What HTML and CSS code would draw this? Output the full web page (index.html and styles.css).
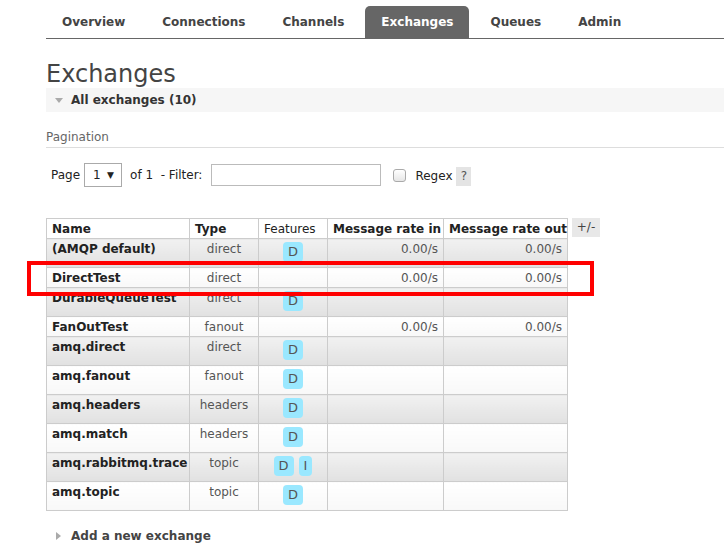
FILE: index.html
```html
<!DOCTYPE html>
<html>
<head>
<meta charset="utf-8">
<title>Exchanges</title>
<link rel="stylesheet" href="styles.css">
</head>
<body>
<div class="page">
  <ul class="tabs">
    <li><a>Overview</a></li>
    <li><a>Connections</a></li>
    <li><a>Channels</a></li>
    <li class="active"><a>Exchanges</a></li>
    <li><a>Queues</a></li>
    <li><a>Admin</a></li>
  </ul>
  <h1>Exchanges</h1>
  <div class="section-head"><span class="tri-down"></span>All exchanges (10)</div>
  <h3 class="pag-title">Pagination</h3>
  <div class="filter-row">
    <span class="lbl-page">Page</span>
    <span class="select"><span class="sel-val">1</span><span class="arrow">▼</span></span>
    <span class="lbl-of">of 1&nbsp; - Filter:</span>
    <span class="input"></span>
    <span class="checkbox"></span>
    <span class="lbl-regex">Regex</span>
    <span class="help">?</span>
  </div>
  <div class="table-wrap">
    <table class="list">
      <colgroup>
        <col class="c-name"><col class="c-type"><col class="c-feat"><col class="c-in"><col class="c-out">
      </colgroup>
      <thead>
        <tr><th>Name</th><th>Type</th><th class="light">Features</th><th>Message rate in</th><th>Message rate out</th></tr>
      </thead>
      <tbody>
        <tr class="odd"><td class="name">(AMQP default)</td><td class="c">direct</td><td class="c"><span class="badge">D</span></td><td class="r">0.00/s</td><td class="r">0.00/s</td></tr>
        <tr class="even"><td class="name">DirectTest</td><td class="c">direct</td><td class="c"></td><td class="r">0.00/s</td><td class="r">0.00/s</td></tr>
        <tr class="odd"><td class="name">DurableQueueTest</td><td class="c">direct</td><td class="c"><span class="badge">D</span></td><td class="r"></td><td class="r"></td></tr>
        <tr class="even"><td class="name">FanOutTest</td><td class="c">fanout</td><td class="c"></td><td class="r">0.00/s</td><td class="r">0.00/s</td></tr>
        <tr class="odd"><td class="name">amq.direct</td><td class="c">direct</td><td class="c"><span class="badge">D</span></td><td class="r"></td><td class="r"></td></tr>
        <tr class="even"><td class="name">amq.fanout</td><td class="c">fanout</td><td class="c"><span class="badge">D</span></td><td class="r"></td><td class="r"></td></tr>
        <tr class="odd"><td class="name">amq.headers</td><td class="c">headers</td><td class="c"><span class="badge">D</span></td><td class="r"></td><td class="r"></td></tr>
        <tr class="even"><td class="name">amq.match</td><td class="c">headers</td><td class="c"><span class="badge">D</span></td><td class="r"></td><td class="r"></td></tr>
        <tr class="odd"><td class="name">amq.rabbitmq.trace</td><td class="c">topic</td><td class="c"><span class="badge">D</span><span class="badge">I</span></td><td class="r"></td><td class="r"></td></tr>
        <tr class="even"><td class="name">amq.topic</td><td class="c">topic</td><td class="c"><span class="badge">D</span></td><td class="r"></td><td class="r"></td></tr>
      </tbody>
    </table>
    <span class="toggle">+/-</span>
  </div>
  <div class="add"><span class="tri-right"></span>Add a new exchange</div>
</div>
<div class="highlight"></div>
</body>
</html>
```
FILE: styles.css
```css
html, body {
  margin: 0;
  padding: 0;
  background: #fff;
}
body {
  font-family: "DejaVu Sans", Verdana, sans-serif;
  font-size: 12px;
  color: #444;
}
.page {
  padding-left: 46px;
}
.tabs {
  list-style: none;
  margin: 0;
  padding: 6px 0 0 0;
  display: flex;
  gap: 5px;
  border-bottom: 1px solid #666;
}
.tabs li a {
  display: block;
  padding: 9px 16px 8px;
  line-height: 15px;
  font-weight: bold;
  color: #444;
  border-radius: 5px 5px 0 0;
}
.tabs li.active a {
  background: #666;
  color: #fff;
}
h1 {
  margin: 21px 0 0 0;
  font-size: 24px;
  font-weight: normal;
  line-height: 28px;
  color: #444;
}
.section-head {
  display: flex;
  align-items: center;
  height: 24px;
  background: #f6f6f6;
  padding-left: 9px;
  font-weight: bold;
  color: #333;
}
.tri-down {
  width: 0;
  height: 0;
  border-left: 4px solid transparent;
  border-right: 4px solid transparent;
  border-top: 5px solid #aaa;
  margin-right: 8px;
}
.pag-title {
  margin: 18px 0 0 0;
  font-size: 12px;
  font-weight: normal;
  line-height: 15px;
  color: #666;
  padding-bottom: 2px;
  border-bottom: 1px solid #ddd;
}
.filter-row {
  display: flex;
  align-items: center;
  height: 24px;
  margin-top: 15px;
  padding-left: 5px;
  color: #222;
}
.lbl-page {
  margin-right: 4px;
}
.select {
  display: flex;
  align-items: center;
  box-sizing: border-box;
  width: 38px;
  height: 24px;
  border: 1px solid #aaa;
  background: #fff;
  padding-left: 8px;
}
.sel-val {
  width: 14px;
}
.arrow {
  font-size: 9px;
  color: #222;
}
.lbl-of {
  margin-left: 8px;
  white-space: pre;
}
.input {
  box-sizing: border-box;
  width: 170px;
  height: 22px;
  border: 1px solid #bbb;
  background: #fff;
  margin-left: 9px;
}
.checkbox {
  box-sizing: border-box;
  width: 13px;
  height: 13px;
  border: 1px solid #aaa;
  border-radius: 3px;
  background: linear-gradient(#fff, #e6e6e6);
  margin-left: 12px;
}
.lbl-regex {
  margin-left: 9px;
  position: relative;
  top: 1px;
}
.help {
  margin-left: 4px;
  width: 15px;
  height: 19px;
  line-height: 19px;
  text-align: center;
  background: #e4e4e4;
  color: #555;
  position: relative;
  top: 1px;
}
.table-wrap {
  display: flex;
  align-items: flex-start;
  gap: 4px;
  margin-top: 31px;
}
table.list {
  border-collapse: collapse;
  table-layout: fixed;
  width: 521px;
}
col.c-name { width: 143px; }
col.c-type { width: 69px; }
col.c-feat { width: 69px; }
col.c-in { width: 116px; }
col.c-out { width: 124px; }
table.list th,
table.list td {
  border: 1px solid #ccc;
  padding: 3px 5px 1px;
  line-height: 15px;
  font-size: 12px;
  vertical-align: top;
  white-space: nowrap;
}
table.list th {
  text-align: left;
  font-weight: bold;
  color: #222;
  background: #fff;
}
table.list th.light {
  font-weight: normal;
}
table.list td {
  color: #555;
}
table.list td.name {
  font-weight: bold;
  color: #222;
  padding-right: 0;
}
table.list td.c {
  text-align: center;
}
table.list td.r {
  text-align: right;
}
tr.odd td {
  background: linear-gradient(#f1f1f1, #e1e1e1);
}
tr.even td {
  background: linear-gradient(#fff, #f8f8f8);
}
.badge {
  display: inline-block;
  vertical-align: top;
  height: 20px;
  line-height: 20px;
  padding: 0 5px;
  margin: 0 0 4px 0;
  border-radius: 4px;
  background: #9ae8ff;
  color: #555;
  font-size: 13px;
}
.badge + .badge {
  margin-left: 5px;
}
.toggle {
  display: block;
  width: 28px;
  height: 19px;
  line-height: 19px;
  text-align: center;
  background: #e8e8e8;
  color: #444;
}
.add {
  display: flex;
  align-items: center;
  margin-top: 17px;
  padding-left: 10px;
  line-height: 16px;
  font-weight: bold;
  color: #444;
}
.tri-right {
  width: 0;
  height: 0;
  border-top: 4px solid transparent;
  border-bottom: 4px solid transparent;
  border-left: 5px solid #aaa;
  margin-right: 10px;
}
.highlight {
  position: absolute;
  left: 27px;
  top: 261px;
  width: 559px;
  height: 27px;
  border: 4px solid #f00;
}
```
